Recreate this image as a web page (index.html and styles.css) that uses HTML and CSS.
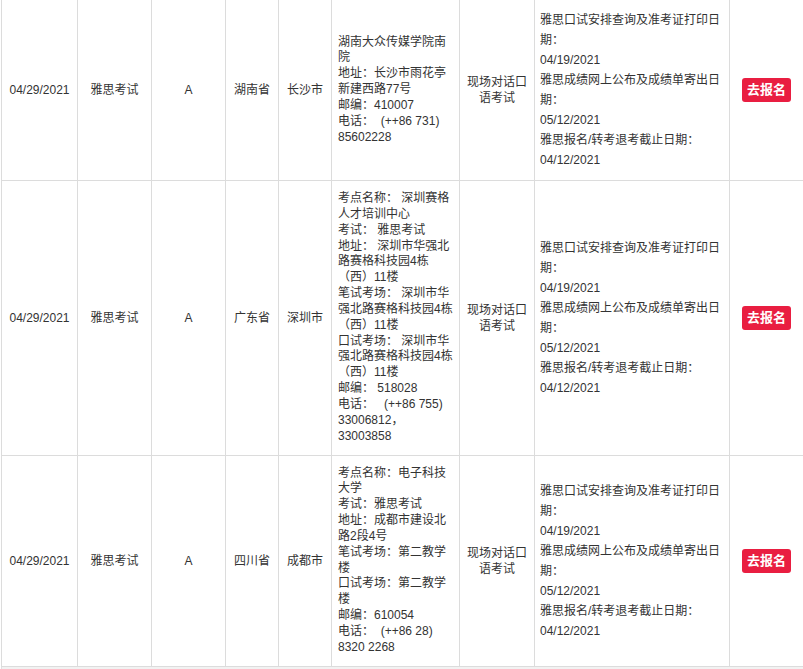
FILE: index.html
```html
<!DOCTYPE html>
<html lang="zh-CN">
<head>
<meta charset="utf-8">
<title>雅思考试考场</title>
<link rel="stylesheet" href="styles.css">
</head>
<body>
<div class="wrap">
<table class="exam-table">
  <colgroup>
    <col class="c-date">
    <col class="c-type">
    <col class="c-mod">
    <col class="c-prov">
    <col class="c-city">
    <col class="c-site">
    <col class="c-oral">
    <col class="c-dates">
    <col class="c-act">
  </colgroup>
  <tbody>
    <tr>
      <td class="center">04/29/2021</td>
      <td class="center">雅思考试</td>
      <td class="center">A</td>
      <td class="center">湖南省</td>
      <td class="center">长沙市</td>
      <td class="site">湖南大众传媒学院南院<br>地址：长沙市雨花亭新建西路77号<br>邮编：410007<br>电话：&nbsp; (++86 731) 85602228</td>
      <td class="center">现场对话口语考试</td>
      <td class="dates">雅思口试安排查询及准考证打印日期：<br>04/19/2021<br>雅思成绩网上公布及成绩单寄出日期：<br>05/12/2021<br>雅思报名/转考退考截止日期：<br>04/12/2021</td>
      <td class="center"><a class="btn" href="#">去报名</a></td>
    </tr>
    <tr>
      <td class="center">04/29/2021</td>
      <td class="center">雅思考试</td>
      <td class="center">A</td>
      <td class="center">广东省</td>
      <td class="center">深圳市</td>
      <td class="site">考点名称： 深圳赛格人才培训中心<br>考试： 雅思考试<br>地址： 深圳市华强北路赛格科技园4栋（西）11楼<br>笔试考场： 深圳市华强北路赛格科技园4栋（西）11楼<br>口试考场： 深圳市华强北路赛格科技园4栋（西）11楼<br>邮编： 518028<br>电话：&nbsp;&nbsp; (++86 755) 33006812，33003858</td>
      <td class="center">现场对话口语考试</td>
      <td class="dates">雅思口试安排查询及准考证打印日期：<br>04/19/2021<br>雅思成绩网上公布及成绩单寄出日期：<br>05/12/2021<br>雅思报名/转考退考截止日期：<br>04/12/2021</td>
      <td class="center"><a class="btn" href="#">去报名</a></td>
    </tr>
    <tr>
      <td class="center">04/29/2021</td>
      <td class="center">雅思考试</td>
      <td class="center">A</td>
      <td class="center">四川省</td>
      <td class="center">成都市</td>
      <td class="site">考点名称：电子科技大学<br>考试：雅思考试<br>地址：成都市建设北路2段4号<br>笔试考场：第二教学楼<br>口试考场：第二教学楼<br>邮编：610054<br>电话：&nbsp; (++86 28) 8320 2268</td>
      <td class="center">现场对话口语考试</td>
      <td class="dates">雅思口试安排查询及准考证打印日期：<br>04/19/2021<br>雅思成绩网上公布及成绩单寄出日期：<br>05/12/2021<br>雅思报名/转考退考截止日期：<br>04/12/2021</td>
      <td class="center"><a class="btn" href="#">去报名</a></td>
    </tr>
    <tr class="next-row">
      <td colspan="9"></td>
    </tr>
  </tbody>
</table>
</div>
</body>
</html>
```

FILE: styles.css
```css
html, body {
  margin: 0;
  padding: 0;
  background: #fff;
}

body {
  font-family: "Liberation Sans", "Noto Sans CJK SC", sans-serif;
  font-size: 12px;
  color: #333;
  overflow: hidden;
}

.wrap {
  padding-left: 1px;
  margin-top: -1px;
}

.exam-table {
  border-collapse: collapse;
  table-layout: fixed;
  width: 802px;
}

.exam-table td {
  border: 1px solid #dcdcdc;
  padding: 10px 6px;
  vertical-align: middle;
  line-height: 16px;
}

.c-date { width: 76px; }
.c-type { width: 74px; }
.c-mod { width: 74px; }
.c-prov { width: 53px; }
.c-city { width: 53px; }
.c-site { width: 128px; }
.c-oral { width: 75px; }
.c-dates { width: 195px; }
.c-act { width: 74px; }

.center {
  text-align: center;
}

.exam-table td.site {
  text-align: left;
  line-height: 15.84px;
  padding-left: 6px;
  padding-right: 6px;
}

.exam-table td.dates {
  text-align: left;
  line-height: 20px;
  padding-left: 5px;
  padding-right: 6px;
}

.btn {
  display: inline-block;
  background: #e91e41;
  color: #fff;
  font-weight: bold;
  font-size: 13px;
  line-height: 24px;
  padding: 0 4.5px;
  border-radius: 3px;
  text-decoration: none;
}

.next-row td {
  background: #f2f2f2;
  height: 30px;
  padding: 0;
  border-color: #e0e0e0;
}
```
